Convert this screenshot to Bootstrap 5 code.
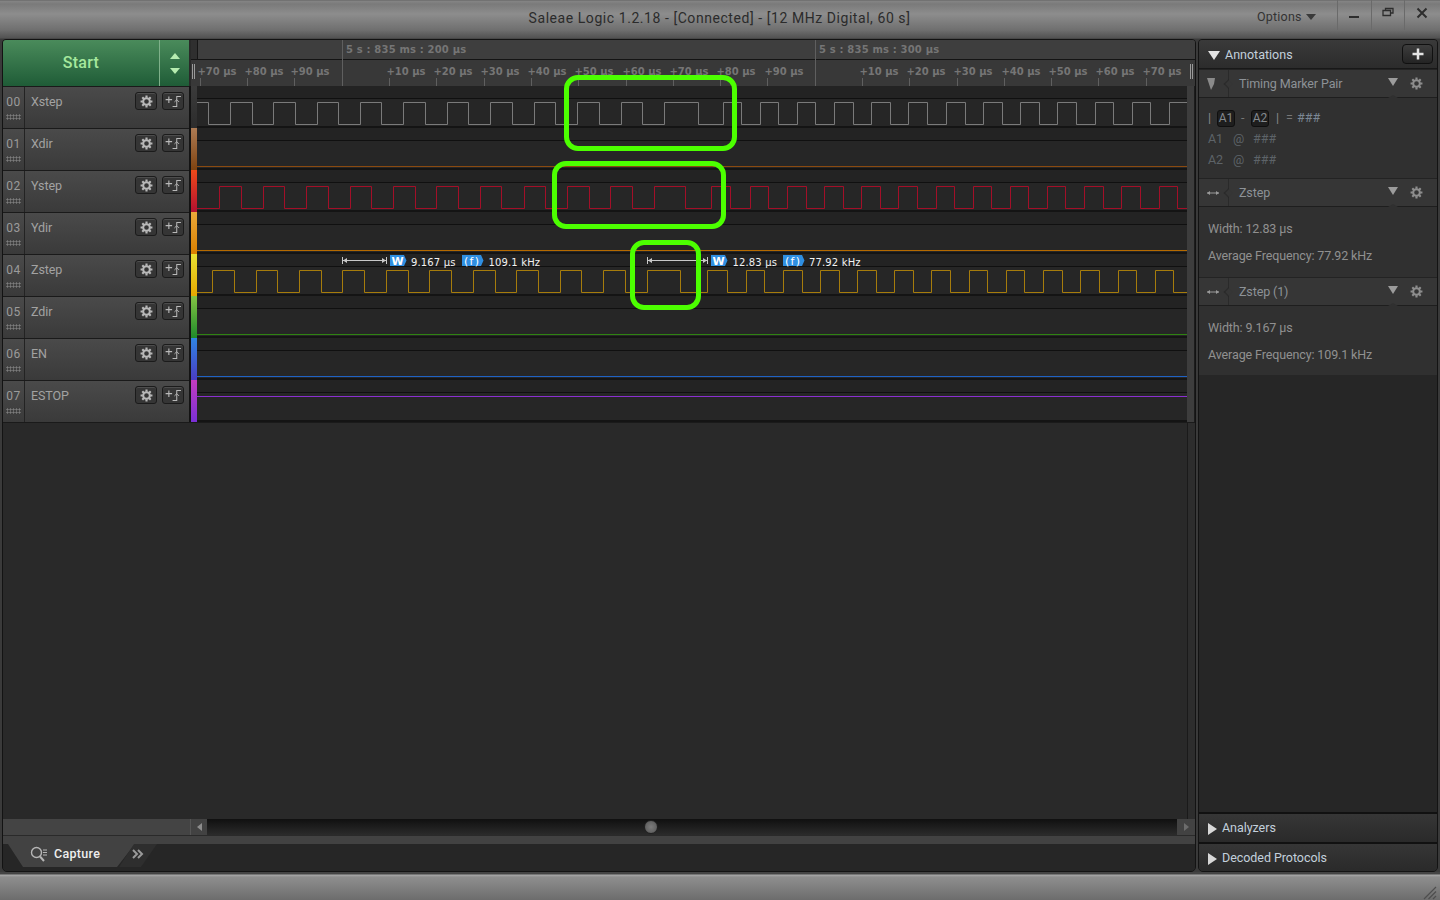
<!DOCTYPE html>
<html lang="en">
<head>
<meta charset="utf-8">
<title>Saleae Logic</title>
<link rel="stylesheet" href="https://cdn.jsdelivr.net/npm/bootstrap@5.3.0/dist/css/bootstrap.min.css">
<style>
html,body{margin:0;height:900px;overflow:hidden}
body{font-family:Roboto,"Liberation Sans",sans-serif;font-size:12px;color:#a4a4a4;background:#111}
.shell{width:1440px;height:900px;background:#4a4a4a}
.titlebar{height:39px;padding-right:2px;background:linear-gradient(#5f5f5f 0,#858585 1px,#7a7a7a 4px,#8d8d8d 14px,#6f6f6f 30px,#525252 38px,#3c3c3c 39px);color:#2e2e2e}
.title-text{left:0;width:100%;top:8px;font-size:14px;letter-spacing:.56px;color:#2b2b2b;text-align:center;padding-right:1px}
.opt{font-size:12.5px;color:#333;letter-spacing:.2px;width:80px;padding-top:3px}
.opt i{display:inline-block;border:5px solid transparent;border-top:6px solid #3a3a3a;border-bottom:0;margin-left:4px;vertical-align:-1px}
.winbtn{width:33.67px;height:30px;border-left:1px solid #6a6a6a;padding-top:7px}
.winbtn svg{stroke:#2d2d2d;fill:none}
.workarea{height:833px;padding:0 2px;gap:2px;background:#3a3a3a}
.leftpanel{width:1194px;background:#292929;border:1px solid #131313;border-radius:4px 4px 5px 5px;overflow:hidden}
.rightpanel{width:240px;background:#262626;border:1px solid #131313;border-radius:4px 4px 5px 5px;overflow:hidden}
.headrow{height:46px}
.startbtn{width:156px;background:linear-gradient(#4a8b5b,#1f5c37);color:#a5e89d;font-size:16px;font-weight:500;letter-spacing:.3px}
.startarrows{width:30px;background:linear-gradient(#4a8b5b,#1f5c37);border-left:1px solid #7fb08a;gap:9px}
.up-tri{border:5px solid transparent;border-bottom:6px solid #b6ecb0;border-top:0}
.down-tri{border:5px solid transparent;border-top:6px solid #b6ecb0;border-bottom:0}
.ruler{display:block;background:#3a3a3a;margin-left:2px}
.ruler text{font-family:"DejaVu Sans",sans-serif;font-size:10px;font-weight:700;fill:#757575;transform:translateX(-.6px)}
.ruler text.toplabel{letter-spacing:.17px;transform:none}
.chrow{height:42px}
.chlabel{width:186px;background:linear-gradient(#4a4a4a,#3a3a3a);border-top:1px solid #1a1a1a}
.chnum{width:22px;border-right:1px solid #232323;font-size:12px;color:#9b9b9b;text-align:center;padding-top:8px;line-height:14px;letter-spacing:.4px}
.grip{width:15px;height:6px;margin:5px auto 0;background-image:radial-gradient(#7c7c7c 0 .9px,transparent 1.2px);background-size:3px 3px}
.chname{font-size:12.5px;color:#a2a2a2;padding:8px 0 0 6px;line-height:14px;letter-spacing:-.1px}
.chbtns{gap:5px;padding:5px 5px 0 0}
.toolbtn{width:22px;height:18px;background:#353535;border:1px solid #1b1b1b;border-radius:3px;box-shadow:inset 0 1px 0 #4d4d4d}
.toolbtn svg{display:block;stroke:#b9b9b9;fill:none}
.gapcol{width:2px;background:#131313}
.bar{width:6px}
.b0{background:linear-gradient(#3b3b3b,#2c2c2c)}
.b1{background:linear-gradient(#ad7b54,#7f4310)}
.b2{background:linear-gradient(#ee4a1a,#b31030)}
.b3{background:linear-gradient(#eaa83a,#d98000)}
.b4{background:linear-gradient(#e8e233,#e6a800)}
.b5{background:linear-gradient(#84c444,#1f8a2a)}
.b6{background:linear-gradient(#2f85e2,#4a3cc4)}
.b7{background:linear-gradient(#c43cc0,#7a30d6)}
.trace{display:block;background:linear-gradient(#232323 0 12px,#101010 12px 13px,#262626 13px 40px,#141414 40px 42px)}
.trace path{fill:none;stroke-width:1}
.trace path.tagshape{fill:#2f8fe2;stroke:none}
.trace path.capshape{fill:#c9c9c9;stroke:none}
.endstrip{width:8px;background:linear-gradient(90deg,#3d3d3d 0 7px,#1c1c1c 7px)}
.rowsend{height:1px;background:#1a1a1a}
.ann-text{font-family:"DejaVu Sans",sans-serif;font-size:10px;fill:#f2f2f2;letter-spacing:.15px}
.ann-tag{font-family:"DejaVu Sans",sans-serif;font-size:11px;font-weight:700;fill:#fff}
.ann-fn{font-family:"DejaVu Sans",sans-serif;font-size:11px;fill:#fff;letter-spacing:1.300px}
.emptyzone{background:#292929}
.emptystrip{width:8px;border-left:1px solid #1a1a1a;background:#2d2d2d}
.scrollrow{height:16px;background:#1b1b1b}
.sgray{width:187px;background:#444}
.sbtn{width:17px;background:#424242;border-left:1px solid #555}
.sbtn.endbtn{width:18px;border-left:0}
.scrolltrack{background:linear-gradient(#101010,#2b2b2b)}
.thumbdot{width:14px;height:14px;border-radius:50%;margin-left:437px;background:radial-gradient(#7c7c7c,#555);border:1px solid #222}
.ltri{border:4px solid transparent;border-right:5px solid #8c8c8c;border-left:0}
.rtri{border:4px solid transparent;border-left:5px solid #6c6c6c;border-right:0}
.greyband{height:9px;background:#424242;border-top:1px solid #2a2a2a}
.tabstrip{height:27px;background:#262626;padding-bottom:4px}
.capturetab{width:134px;background:#424242;color:#eee;font-size:12.5px;font-weight:500;letter-spacing:.3px;clip-path:polygon(0 0,134px 0,116px 23px,22px 23px,7px 0);padding:0 0 3px 29px;gap:6px;margin-left:-2px}
.moretab{width:38px;margin-left:-16px;background:#2e2e2e;clip-path:polygon(15px 0,38px 0,22px 23px,0 23px);padding-left:13px;padding-bottom:3px}
.moretab svg{stroke:#9a9a9a;fill:none}
.anhead{height:29px;background:linear-gradient(#3a3a3a,#2c2c2c);border-bottom:1px solid #181818;padding:0 4px 0 9px}
.anhead .annlabel{color:#c3d0dc;font-size:12.5px;margin-left:5px;padding-top:2px}
.whtri{border:6px solid transparent;border-top:9px solid #e4e4e4;border-bottom:0;margin-top:2px}
.plusbtn{width:31px;height:20px;background:linear-gradient(#3d3d3d,#242424);border:1px solid #101010;border-radius:4px}
.itemhead{height:29px;background:#363636;border-top:1px solid #232323;border-bottom:1px solid #1e1e1e}
.itemhead::after{content:"";position:absolute;left:189px;bottom:-1px;border:5px solid transparent;border-top:0;border-bottom:3px solid #303030}
.itemicon{width:30px;border-right:1px solid #2a2a2a;padding-left:7px}
.itemicon::after{content:"";position:absolute;right:-3px;top:50%;width:6px;height:6px;margin-top:-3px;background:#363636;border-left:1px solid #2a2a2a;border-bottom:1px solid #2a2a2a;transform:rotate(45deg)}
.itemname{font-size:12.5px;color:#8d9297;padding:2px 0 0 10px;letter-spacing:-.12px}
.graytri{border:5px solid transparent;border-top:8px solid #9c9c9c;border-bottom:0;margin:0 12px 3px 0}
.itemgear{margin-right:14px;fill:none;stroke:#8e8e8e}
.itembody{background:#303030;padding:0 9px;font-size:12.5px;color:#909090;letter-spacing:-.12px}
.bodyA{height:80px;padding-top:10px}
.calcrow{height:21px}
.bodyB{height:70px;padding-top:8px;line-height:27px}
.bodyC{height:69px}
.dimtxt{color:#5d6368}
.pipe{color:#888;width:3px}
.keycap{width:18px;height:17px;line-height:15px;text-align:center;background:#1e1e1e;border:1px solid #0f0f0f;border-radius:3px;color:#858a8f;margin-left:6px;font-size:12px;letter-spacing:0}
.dash{margin-left:6px;width:4px;color:#777}
.pipe2{margin-left:7px;width:3px;color:#888}
.eqs{margin-left:7px;width:7px;color:#777}
.hashes{color:#7b8794;margin-left:4px;letter-spacing:0}
.atsign{margin-left:10px}
.hashdim{margin-left:9px;letter-spacing:0}
.fillarea{background:#262626}
.collapsehead{background:linear-gradient(#363636,#2a2a2a);border-top:2px solid #111;color:#c3d0dc;font-size:12.5px;padding:1px 0 0 9px;gap:5px;letter-spacing:-.05px}
.ch1{height:30px}
.ch2{height:29px;padding-top:2px}
.whtri-r{border:6px solid transparent;border-left:9px solid #d8d8d8;border-right:0}
.statusbar{height:28px;background:linear-gradient(#444 0 2px,#a9a9a9 3px,#8e8e8e 5px,#7d7d7d 17px,#6c6c6c 28px);padding-right:3px}
.statusbar svg{stroke:#4e4e4e;fill:none}
.hl1,.hl2,.hl3{border:5px solid #4cff00;border-radius:14px;pointer-events:none}
.hl1{left:564px;top:75px;width:173px;height:76px}
.hl2{left:552px;top:161px;width:174px;height:68px}
.hl3{left:630px;top:240px;width:71px;height:70px}
</style>
</head>
<body class="position-relative">
<svg class="d-none" xmlns="http://www.w3.org/2000/svg">
<symbol id="gear" viewBox="0 0 14 14"><path d="M7 .6V3M7 11V13.4M.6 7H3M11 7H13.4M2.5 2.5L4.2 4.2M9.8 9.8L11.5 11.5M11.5 2.5L9.8 4.2M4.2 9.8L2.5 11.5" stroke-width="2.3"/><circle cx="7" cy="7" r="3.6" stroke-width="2.2"/></symbol>
<symbol id="edge" viewBox="0 0 18 14"><path d="M.5 5H7.5M4 1.5V8.5" stroke-width="1.2"/><path d="M17 1.5H12.5V12.5H8" stroke-width="1.1"/><path d="M10 7.5L12.5 5L15 7.5" stroke-width="1"/></symbol>
</svg>
<div class="shell d-flex flex-column">
  <header class="titlebar d-flex justify-content-end position-relative">
    <div class="title-text position-absolute">Saleae Logic 1.2.18 - [Connected] - [12 MHz Digital, 60 s]</div>
    <div class="opt d-flex align-items-center pb-2">Options <i></i></div>
    <div class="winbtn d-flex align-items-start justify-content-center"><svg width="12" height="12" viewBox="0 0 12 12"><path d="M1 10H11" stroke-width="2"/></svg></div>
    <div class="winbtn d-flex align-items-start justify-content-center"><svg width="12" height="12" viewBox="0 0 12 12"><path d="M3.5 3V1.5H11V6H9M1 3.5H8.5V8.5H1Z" stroke-width="1.3"/></svg></div>
    <div class="winbtn d-flex align-items-start justify-content-center"><svg width="12" height="12" viewBox="0 0 12 12"><path d="M1.5 1.5L10.5 10.5M10.5 1.5L1.5 10.5" stroke-width="2"/></svg></div>
  </header>
  <div class="workarea d-flex">
    <section class="leftpanel d-flex flex-column">
      <div class="headrow d-flex">
        <div class="startbtn d-flex align-items-center justify-content-center">Start</div>
        <div class="startarrows d-flex flex-column align-items-center justify-content-center"><span class="up-tri"></span><span class="down-tri"></span></div>
        <svg class="ruler" width="1004" height="46" viewBox="191 40 1004 46" xmlns="http://www.w3.org/2000/svg">
          <rect x="191" y="40" width="1004" height="19" fill="#3e3e3e"/>
          <rect x="191" y="40" width="6" height="19" fill="#2f2f2f"/>
          <rect x="191" y="59" width="1004" height="1" fill="#141414"/>
          <rect x="191" y="60" width="1004" height="26" fill="#383838"/>
          <path d="M197.500 40V60" stroke="#161616"/>
          <path d="M192.500 64V79M194.500 64V79M1190.500 64V79M1192.500 64V79" stroke="#9a9a9a"/>
          <path d="M342.500 40V86M815.500 40V86" stroke="#5f5f5f"/>
          <path d="M200.500 78V86M247.500 78V86M294.500 78V86M389.500 78V86M436.500 78V86M484.500 78V86M531.500 78V86M578.500 78V86M626.500 78V86M673.500 78V86M720.500 78V86M767.500 78V86M862.500 78V86M909.500 78V86M957.500 78V86M1004.500 78V86M1051.500 78V86M1098.500 78V86M1146.500 78V86" stroke="#5f5f5f"/>
          <text class="toplabel" x="346" y="53">5 s : 835 ms : 200 µs</text>
          <text class="toplabel" x="819" y="53">5 s : 835 ms : 300 µs</text>
          <text x="198" y="75">+70 µs</text><text x="245" y="75">+80 µs</text><text x="291" y="75">+90 µs</text>
          <text x="387" y="75">+10 µs</text><text x="434" y="75">+20 µs</text><text x="481" y="75">+30 µs</text><text x="528" y="75">+40 µs</text><text x="575" y="75">+50 µs</text><text x="623" y="75">+60 µs</text><text x="670" y="75">+70 µs</text><text x="717" y="75">+80 µs</text><text x="765" y="75">+90 µs</text>
          <text x="860" y="75">+10 µs</text><text x="907" y="75">+20 µs</text><text x="954" y="75">+30 µs</text><text x="1002" y="75">+40 µs</text><text x="1049" y="75">+50 µs</text><text x="1096" y="75">+60 µs</text><text x="1143" y="75">+70 µs</text>
        </svg>
      </div>

      <div class="chrow d-flex">
        <div class="chlabel d-flex"><div class="chnum">00<div class="grip"></div></div><div class="chname flex-grow-1">Xstep</div><div class="chbtns d-flex"><div class="toolbtn d-flex align-items-center justify-content-center"><svg width="13" height="13"><use href="#gear"/></svg></div><div class="toolbtn d-flex align-items-center justify-content-center"><svg width="17" height="13"><use href="#edge"/></svg></div></div></div>
        <div class="gapcol"></div><div class="bar b0"></div>
        <svg class="trace" width="990" height="42" viewBox="197 0 990 42" xmlns="http://www.w3.org/2000/svg"><path stroke="#7a7a7a" d="M197 16.5H208.5V38.5H230.5V16.5H252.5V38.5H273.5V16.5H295.5V38.5H317.5V16.5H338.5V38.5H360.5V16.5H381.5V38.5H403.5V16.5H425.5V38.5H447.5V16.5H468.5V38.5H490.5V16.5H512.5V38.5H534.5V16.5H555.5V38.5H577.5V16.5H599.5V38.5H621.5V16.5H642.5V38.5H664.5V16.5H698.5V38.5H723.5V16.5H741.5V38.5H760.5V16.5H778.5V38.5H797.5V16.5H815.5V38.5H834.5V16.5H853.5V38.5H871.5V16.5H890.5V38.5H908.5V16.5H927.5V38.5H946.5V16.5H965.5V38.5H983.5V16.5H1002.5V38.5H1020.5V16.5H1039.5V38.5H1057.5V16.5H1076.5V38.5H1095.5V16.5H1113.5V38.5H1132.5V16.5H1150.5V38.5H1169.5V16.5H1187"/></svg>
        <div class="endstrip"></div>
      </div>

      <div class="chrow d-flex">
        <div class="chlabel d-flex"><div class="chnum">01<div class="grip"></div></div><div class="chname flex-grow-1">Xdir</div><div class="chbtns d-flex"><div class="toolbtn d-flex align-items-center justify-content-center"><svg width="13" height="13"><use href="#gear"/></svg></div><div class="toolbtn d-flex align-items-center justify-content-center"><svg width="17" height="13"><use href="#edge"/></svg></div></div></div>
        <div class="gapcol"></div><div class="bar b1"></div>
        <svg class="trace" width="990" height="42" viewBox="197 0 990 42" xmlns="http://www.w3.org/2000/svg"><path stroke="#8a4a10" d="M197 38.5H1187"/></svg>
        <div class="endstrip"></div>
      </div>

      <div class="chrow d-flex">
        <div class="chlabel d-flex"><div class="chnum">02<div class="grip"></div></div><div class="chname flex-grow-1">Ystep</div><div class="chbtns d-flex"><div class="toolbtn d-flex align-items-center justify-content-center"><svg width="13" height="13"><use href="#gear"/></svg></div><div class="toolbtn d-flex align-items-center justify-content-center"><svg width="17" height="13"><use href="#edge"/></svg></div></div></div>
        <div class="gapcol"></div><div class="bar b2"></div>
        <svg class="trace" width="990" height="42" viewBox="197 0 990 42" xmlns="http://www.w3.org/2000/svg"><path stroke="#a30f28" d="M197 38.5H219.5V16.5H241.5V38.5H263.5V16.5H284.5V38.5H306.5V16.5H328.5V38.5H350.5V16.5H371.5V38.5H393.5V16.5H415.5V38.5H436.5V16.5H458.5V38.5H480.5V16.5H501.5V38.5H524.5V16.5H545.5V38.5H567.5V16.5H589.5V38.5H610.5V16.5H632.5V38.5H654.5V16.5H685.5V38.5H711.5V16.5H730.5V38.5H750.5V16.5H768.5V38.5H787.5V16.5H806.5V38.5H824.5V16.5H843.5V38.5H861.5V16.5H880.5V38.5H898.5V16.5H917.5V38.5H936.5V16.5H954.5V38.5H973.5V16.5H991.5V38.5H1010.5V16.5H1028.5V38.5H1047.5V16.5H1065.5V38.5H1084.5V16.5H1103.5V38.5H1121.5V16.5H1140.5V38.5H1159.5V16.5H1177.5V38.5H1187"/></svg>
        <div class="endstrip"></div>
      </div>

      <div class="chrow d-flex">
        <div class="chlabel d-flex"><div class="chnum">03<div class="grip"></div></div><div class="chname flex-grow-1">Ydir</div><div class="chbtns d-flex"><div class="toolbtn d-flex align-items-center justify-content-center"><svg width="13" height="13"><use href="#gear"/></svg></div><div class="toolbtn d-flex align-items-center justify-content-center"><svg width="17" height="13"><use href="#edge"/></svg></div></div></div>
        <div class="gapcol"></div><div class="bar b3"></div>
        <svg class="trace" width="990" height="42" viewBox="197 0 990 42" xmlns="http://www.w3.org/2000/svg"><path stroke="#b56a00" d="M197 38.5H1187"/></svg>
        <div class="endstrip"></div>
      </div>

      <div class="chrow d-flex">
        <div class="chlabel d-flex"><div class="chnum">04<div class="grip"></div></div><div class="chname flex-grow-1">Zstep</div><div class="chbtns d-flex"><div class="toolbtn d-flex align-items-center justify-content-center"><svg width="13" height="13"><use href="#gear"/></svg></div><div class="toolbtn d-flex align-items-center justify-content-center"><svg width="17" height="13"><use href="#edge"/></svg></div></div></div>
        <div class="gapcol"></div><div class="bar b4"></div>
        <svg class="trace" width="990" height="42" viewBox="197 0 990 42" xmlns="http://www.w3.org/2000/svg">
          <path stroke="#a67c0c" d="M197 38.5H212.5V16.5H234.5V38.5H256.5V16.5H277.5V38.5H299.5V16.5H321.5V38.5H342.5V16.5H364.5V38.5H386.5V16.5H408.5V38.5H429.5V16.5H451.5V38.5H473.5V16.5H495.5V38.5H516.5V16.5H538.5V38.5H560.5V16.5H581.5V38.5H603.5V16.5H625.5V38.5H647.5V16.5H680.5V38.5H707.5V16.5H727.5V38.5H746.5V16.5H764.5V38.5H783.5V16.5H802.5V38.5H820.5V16.5H839.5V38.5H857.5V16.5H876.5V38.5H894.5V16.5H913.5V38.5H931.5V16.5H950.5V38.5H969.5V16.5H987.5V38.5H1006.5V16.5H1024.5V38.5H1043.5V16.5H1062.5V38.5H1080.5V16.5H1099.5V38.5H1118.5V16.5H1136.5V38.5H1155.5V16.5H1173.5V38.5H1187"/>
          <path stroke="#c9c9c9" d="M342.5 3V10M386.5 3V10M343 6.5H386M647.5 3V10M707.5 3V10M648 6.5H707"/>
          <path class="capshape" d="M343 6.5l4-2.5v5zM386 6.5l-4-2.5v5zM648 6.5l4-2.5v5zM707 6.5l-4-2.5v5z"/>
          <path class="tagshape" d="M390 1H404L406.5 6.5L404 12H390ZM462 1H481L483.5 6.5L481 12H462ZM711 1H725L727.5 6.5L725 12H711ZM783 1H802L804.5 6.5L802 12H783Z"/>
          <text class="ann-tag" x="391.500" y="10.500">W</text><text class="ann-fn" x="464" y="10.500">(f)</text>
          <text class="ann-text" x="411" y="12">9.167 µs</text><text class="ann-text" x="488.500" y="12">109.1 kHz</text>
          <text class="ann-tag" x="712.500" y="10.500">W</text><text class="ann-fn" x="785" y="10.500">(f)</text>
          <text class="ann-text" x="732.500" y="12">12.83 µs</text><text class="ann-text" x="809" y="12">77.92 kHz</text>
        </svg>
        <div class="endstrip"></div>
      </div>

      <div class="chrow d-flex">
        <div class="chlabel d-flex"><div class="chnum">05<div class="grip"></div></div><div class="chname flex-grow-1">Zdir</div><div class="chbtns d-flex"><div class="toolbtn d-flex align-items-center justify-content-center"><svg width="13" height="13"><use href="#gear"/></svg></div><div class="toolbtn d-flex align-items-center justify-content-center"><svg width="17" height="13"><use href="#edge"/></svg></div></div></div>
        <div class="gapcol"></div><div class="bar b5"></div>
        <svg class="trace" width="990" height="42" viewBox="197 0 990 42" xmlns="http://www.w3.org/2000/svg"><path stroke="#2f8212" d="M197 38.5H1187"/></svg>
        <div class="endstrip"></div>
      </div>

      <div class="chrow d-flex">
        <div class="chlabel d-flex"><div class="chnum">06<div class="grip"></div></div><div class="chname flex-grow-1">EN</div><div class="chbtns d-flex"><div class="toolbtn d-flex align-items-center justify-content-center"><svg width="13" height="13"><use href="#gear"/></svg></div><div class="toolbtn d-flex align-items-center justify-content-center"><svg width="17" height="13"><use href="#edge"/></svg></div></div></div>
        <div class="gapcol"></div><div class="bar b6"></div>
        <svg class="trace" width="990" height="42" viewBox="197 0 990 42" xmlns="http://www.w3.org/2000/svg"><path stroke="#1f62c4" d="M197 38.5H1187"/></svg>
        <div class="endstrip"></div>
      </div>

      <div class="chrow d-flex">
        <div class="chlabel d-flex"><div class="chnum">07<div class="grip"></div></div><div class="chname flex-grow-1">ESTOP</div><div class="chbtns d-flex"><div class="toolbtn d-flex align-items-center justify-content-center"><svg width="13" height="13"><use href="#gear"/></svg></div><div class="toolbtn d-flex align-items-center justify-content-center"><svg width="17" height="13"><use href="#edge"/></svg></div></div></div>
        <div class="gapcol"></div><div class="bar b7"></div>
        <svg class="trace" width="990" height="42" viewBox="197 0 990 42" xmlns="http://www.w3.org/2000/svg"><path stroke="#8a2fd0" d="M197 16.5H1187"/></svg>
        <div class="endstrip"></div>
      </div>
      <div class="rowsend"></div>

      <div class="emptyzone flex-grow-1 d-flex justify-content-end"><div class="emptystrip"></div></div>
      <div class="scrollrow d-flex">
        <div class="sgray"></div>
        <div class="sbtn d-flex align-items-center justify-content-center"><span class="ltri"></span></div>
        <div class="scrolltrack flex-grow-1 d-flex align-items-center"><span class="thumbdot"></span></div>
        <div class="sbtn endbtn d-flex align-items-center justify-content-center"><span class="rtri"></span></div>
      </div>
      <div class="greyband"></div>
      <div class="tabstrip d-flex">
        <div class="capturetab d-flex align-items-center">
          <svg width="18" height="16" viewBox="0 0 18 16" fill="none" stroke="#b5b5b5"><circle cx="6.500" cy="6.500" r="5" stroke-width="1.400"/><path d="M10 10.500L14 15" stroke-width="2"/><path d="M13 4H17M13 6.500H17M13 9H17" stroke-width="1"/></svg>
          <span>Capture</span>
        </div>
        <div class="moretab d-flex align-items-center"><svg width="12" height="10" viewBox="0 0 12 10" stroke-width="2"><path d="M1 1L5 5L1 9M6 1L10 5L6 9"/></svg></div>
      </div>
    </section>

    <aside class="rightpanel d-flex flex-column">
      <div class="anhead d-flex align-items-center">
        <span class="whtri"></span><span class="annlabel flex-grow-1">Annotations</span>
        <span class="plusbtn d-flex align-items-center justify-content-center"><svg width="12" height="12" viewBox="0 0 12 12" stroke="#e4e4e4" stroke-width="2.500"><path d="M6 .5V11.500M.5 6H11.500"/></svg></span>
      </div>
      <div class="itemhead position-relative d-flex align-items-center">
        <div class="itemicon position-relative d-flex h-100 align-items-center"><svg width="10" height="14" viewBox="0 0 10 14" fill="#8a8a8a"><path d="M1 1H9L8 7L5 13L3 7Z"/></svg></div>
        <div class="itemname flex-grow-1">Timing Marker Pair</div>
        <span class="graytri"></span><svg class="itemgear" width="13" height="13"><use href="#gear"/></svg>
      </div>
      <div class="itembody bodyA">
        <div class="calcrow d-flex align-items-center"><span class="pipe">|</span><span class="keycap">A1</span><span class="dash">-</span><span class="keycap">A2</span><span class="pipe2">|</span><span class="eqs">=</span><span class="hashes">###</span></div>
        <div class="calcrow d-flex align-items-center dimtxt"><span>A1</span><span class="atsign">@</span><span class="hashdim">###</span></div>
        <div class="calcrow d-flex align-items-center dimtxt"><span>A2</span><span class="atsign">@</span><span class="hashdim">###</span></div>
      </div>
      <div class="itemhead position-relative d-flex align-items-center">
        <div class="itemicon position-relative d-flex h-100 align-items-center"><svg width="14" height="8" viewBox="0 0 14 8" fill="#9a9a9a" stroke="#9a9a9a"><path d="M1 4H13" stroke-width="1"/><path d="M1 4L4 2V6ZM13 4L10 2V6Z" stroke="none"/></svg></div>
        <div class="itemname flex-grow-1">Zstep</div>
        <span class="graytri"></span><svg class="itemgear" width="13" height="13"><use href="#gear"/></svg>
      </div>
      <div class="itembody bodyB"><div>Width: 12.83 µs</div><div>Average Frequency: 77.92 kHz</div></div>
      <div class="itemhead position-relative d-flex align-items-center">
        <div class="itemicon position-relative d-flex h-100 align-items-center"><svg width="14" height="8" viewBox="0 0 14 8" fill="#9a9a9a" stroke="#9a9a9a"><path d="M1 4H13" stroke-width="1"/><path d="M1 4L4 2V6ZM13 4L10 2V6Z" stroke="none"/></svg></div>
        <div class="itemname flex-grow-1">Zstep (1)</div>
        <span class="graytri"></span><svg class="itemgear" width="13" height="13"><use href="#gear"/></svg>
      </div>
      <div class="itembody bodyB bodyC"><div>Width: 9.167 µs</div><div>Average Frequency: 109.1 kHz</div></div>
      <div class="fillarea flex-grow-1"></div>
      <div class="collapsehead ch1 d-flex align-items-center"><span class="whtri-r"></span><span>Analyzers</span></div>
      <div class="collapsehead ch2 d-flex align-items-center"><span class="whtri-r"></span><span>Decoded Protocols</span></div>
    </aside>
  </div>
  <footer class="statusbar d-flex justify-content-end align-items-end">
    <svg width="14" height="14" viewBox="0 0 14 14" stroke-width="1.200"><path d="M1 13L13 1M5.500 13L13 5.500M10 13L13 10"/></svg>
  </footer>
</div>
<div class="hl1 position-absolute"></div>
<div class="hl2 position-absolute"></div>
<div class="hl3 position-absolute"></div>
</body>
</html>
